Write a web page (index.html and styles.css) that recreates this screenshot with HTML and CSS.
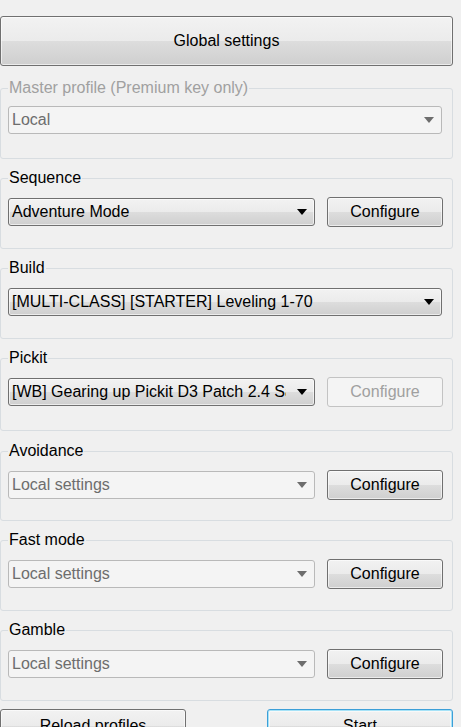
FILE: index.html
```html
<!DOCTYPE html>
<html>
<head>
<meta charset="utf-8">
<link rel="stylesheet" href="styles.css">
</head>
<body>
<div class="app">
  <button class="btn btn-global">Global settings</button>

  <fieldset class="group group-first">
    <legend class="legend-off">Master profile (Premium key only)</legend>
    <div class="row">
      <div class="combo combo-off combo-full"><span class="combo-text">Local</span><span class="arrow"></span></div>
    </div>
  </fieldset>

  <fieldset class="group">
    <legend>Sequence</legend>
    <div class="row">
      <div class="combo"><span class="combo-text">Adventure Mode</span><span class="arrow"></span></div>
      <button class="btn btn-cfg">Configure</button>
    </div>
  </fieldset>

  <fieldset class="group">
    <legend>Build</legend>
    <div class="row">
      <div class="combo combo-full"><span class="combo-text">[MULTI-CLASS] [STARTER] Leveling 1-70</span><span class="arrow"></span></div>
    </div>
  </fieldset>

  <fieldset class="group group-tall">
    <legend>Pickit</legend>
    <div class="row">
      <div class="combo"><span class="combo-text">[WB] Gearing up Pickit D3 Patch 2.4 Sample</span><span class="arrow"></span></div>
      <button class="btn btn-cfg btn-off">Configure</button>
    </div>
  </fieldset>

  <fieldset class="group group-short">
    <legend>Avoidance</legend>
    <div class="row">
      <div class="combo combo-off"><span class="combo-text">Local settings</span><span class="arrow"></span></div>
      <button class="btn btn-cfg">Configure</button>
    </div>
  </fieldset>

  <fieldset class="group">
    <legend>Fast mode</legend>
    <div class="row">
      <div class="combo combo-off"><span class="combo-text">Local settings</span><span class="arrow"></span></div>
      <button class="btn btn-cfg">Configure</button>
    </div>
  </fieldset>

  <fieldset class="group">
    <legend>Gamble</legend>
    <div class="row">
      <div class="combo combo-off"><span class="combo-text">Local settings</span><span class="arrow"></span></div>
      <button class="btn btn-cfg">Configure</button>
    </div>
  </fieldset>

  <div class="footer">
    <button class="btn btn-foot">Reload profiles</button>
    <button class="btn btn-foot btn-focus">Start</button>
  </div>
</div>
</body>
</html>
```
FILE: styles.css
```css
html, body {
  margin: 0;
  padding: 0;
  background: #f0f0f0;
  overflow: hidden;
}
body {
  font-family: "Liberation Sans", Arial, sans-serif;
  font-size: 16px;
  color: #000;
}
.app {
  width: 453px;
  padding-top: 16px;
  display: flex;
  flex-direction: column;
}
.btn {
  font-family: "Liberation Sans", Arial, sans-serif;
  font-size: 16px;
  color: #000;
  border: 1px solid #707070;
  border-radius: 3px;
  background: linear-gradient(#f2f2f2 0%, #ebebeb 50%, #dddddd 50%, #cfcfcf 100%);
  box-shadow: inset 0 0 0 1px rgba(255,255,255,0.6);
  padding: 0;
  margin: 0;
  box-sizing: border-box;
  cursor: default;
}
.btn-global {
  height: 50px;
  width: 453px;
}
.group {
  margin: 10px 0 0 0;
  padding: 10px 10px 21px 7px;
  border: 1px solid #d8dde1;
  border-radius: 3px;
  min-width: 0;
}
.group.group-first {
  margin-top: 13px;
  padding-top: 8px;
  padding-bottom: 23px;
}
.group.group-tall {
  padding-bottom: 23px;
}
.group.group-short {
  margin-top: 11px;
  padding-bottom: 20px;
}
.group legend {
  padding: 0 1px;
  margin-left: 0;
  line-height: 18px;
  height: 18px;
  color: #000;
}
.group legend.legend-off {
  color: #a0a0a0;
}
.row {
  display: flex;
  align-items: center;
  justify-content: space-between;
  height: 30px;
}
.combo {
  position: relative;
  box-sizing: border-box;
  width: 307px;
  height: 28px;
  border: 1px solid #707070;
  border-radius: 3px;
  background: linear-gradient(#f2f2f2 0%, #ebebeb 50%, #dddddd 50%, #cfcfcf 100%);
  box-shadow: inset 0 0 0 1px rgba(255,255,255,0.6);
  display: flex;
  align-items: center;
}
.combo-full {
  width: 434px;
}
.combo-text {
  display: block;
  padding-left: 3px;
  width: calc(100% - 31px);
  white-space: nowrap;
  overflow: hidden;
  line-height: 26px;
}
.arrow {
  position: absolute;
  right: 7px;
  top: 10px;
  width: 0;
  height: 0;
  border-left: 5.5px solid transparent;
  border-right: 5.5px solid transparent;
  border-top: 6px solid #000;
}
.combo-off {
  background: #f4f4f4;
  border-color: #b9b9b9;
  box-shadow: none;
  color: #6d6d6d;
}
.combo-off .arrow {
  border-top-color: #6d6d6d;
}
.btn-cfg {
  width: 116px;
  height: 30px;
  margin-right: -1px;
}
.btn-off {
  background: #f4f4f4;
  border-color: #c3c3c3;
  box-shadow: none;
  color: #a0a0a0;
}
.footer {
  margin-top: 8px;
  display: flex;
  justify-content: space-between;
}
.btn-foot {
  width: 186px;
  height: 34px;
}
.btn-focus {
  border-color: #3c9fd8;
  box-shadow: inset 0 0 0 1px #a6e2f7, inset 0 0 0 2px rgba(255,255,255,0.5);
}
```
